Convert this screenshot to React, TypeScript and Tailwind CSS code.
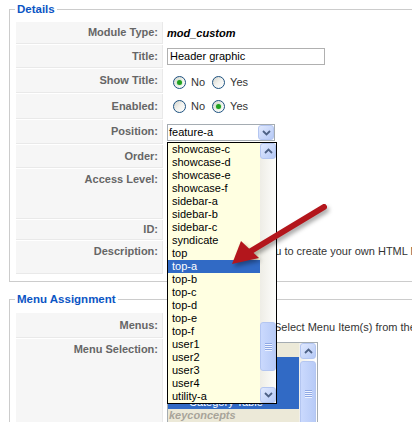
import React from "react";

const positions = [
  "showcase-c",
  "showcase-d",
  "showcase-e",
  "showcase-f",
  "sidebar-a",
  "sidebar-b",
  "sidebar-c",
  "syndicate",
  "top",
  "top-a",
  "top-b",
  "top-c",
  "top-d",
  "top-e",
  "top-f",
  "user1",
  "user2",
  "user3",
  "user4",
  "utility-a",
];

// rows of the menu list that sit under the open dropdown
const menuItems = ["", "", "", "Category Table"];

function Radio({ checked }: { checked?: boolean }) {
  return (
    <span className="inline-flex h-[13px] w-[13px] shrink-0 items-center justify-center rounded-full border border-[#1c5180] bg-linear-to-br from-[#d4d4cc] via-[#f2f2ee] to-white">
      {checked && <span className="h-[5px] w-[5px] rounded-full bg-[#21a121] shadow-[0_0_2px_#8fdc8f]" />}
    </span>
  );
}

function ScrollButton({ dir, size = "h-[16px] w-[16px]" }: { dir: "up" | "down"; size?: string }) {
  return (
    <div
      className={`flex shrink-0 items-center justify-center rounded-[3px] border border-[#b4c6f1] bg-linear-to-br from-[#e1e9fe] to-[#b5c9f6] ${size}`}
    >
      <svg width="9" height="6" viewBox="0 0 9 6">
        <path
          d={dir === "up" ? "M1 5 L4.5 1.5 L8 5" : "M1 1 L4.5 4.5 L8 1"}
          fill="none"
          stroke="#4d6185"
          strokeWidth="1.8"
        />
      </svg>
    </div>
  );
}

function ScrollThumb({ height }: { height: string }) {
  return (
    <div
      className={`flex w-[16px] shrink-0 flex-col items-center justify-center gap-px rounded-[3px] border border-[#b4c6f1] bg-linear-to-r from-[#cad9fd] to-[#b8cbf7] ${height}`}
    >
      {[0, 1, 2, 3].map((i) => (
        <div key={i} className="h-px w-[7px] bg-[#8fa8e4] shadow-[0_1px_0_#eef3ff]" />
      ))}
    </div>
  );
}

interface RowProps {
  height: string;
  label: string;
  alignTop?: boolean;
  valueClass?: string;
  children?: React.ReactNode;
}

function Row({ height, label, alignTop, valueClass, children }: RowProps) {
  return (
    <div className={`flex ${height}`}>
      <div
        className={`flex w-[147px] shrink-0 justify-end whitespace-nowrap border-r border-b border-[#e9e9e9] bg-[#f6f6f6] pr-[4px] text-[11px] leading-[13px] font-bold text-[#666666] ${
          alignTop ? "items-start pt-[4px]" : "items-center"
        }`}
      >
        {label}
      </div>
      <div
        className={`ml-px flex min-w-0 flex-1 pl-[3px] text-[11px] leading-[13px] text-[#333333] ${
          valueClass ?? "items-center"
        }`}
      >
        {children}
      </div>
    </div>
  );
}

export default function App() {
  return (
    <div className="relative h-[422px] w-[412px] overflow-hidden bg-white pt-[2px] font-['Liberation_Sans',Arial,sans-serif]">
      {/* Details */}
      <fieldset className="ml-[9px] w-[420px] border border-[#cccccc] px-[6px] pt-[6px] pb-[7px]">
        <legend className="-ml-[1px] px-[2px] text-[11.5px] leading-[14px] font-bold text-[#0b55c4]">Details</legend>
        <div className="flex flex-col gap-px">
          <Row height="h-[22px]" label="Module Type:">
            <span className="font-bold italic text-black">mod_custom</span>
          </Row>
          <Row height="h-[23px]" label="Title:">
            <div className="flex h-[17px] w-[158px] items-center border border-[#b0b0b0] bg-white pl-[2px] text-black">
              Header graphic
            </div>
          </Row>
          <Row height="h-[24px]" label="Show Title:" valueClass="items-center pt-[3px]">
            <span className="ml-[6px] flex">
              <Radio checked />
            </span>
            <span className="ml-[5px]">No</span>
            <span className="ml-[7px] flex">
              <Radio />
            </span>
            <span className="ml-[5px]">Yes</span>
          </Row>
          <Row height="h-[25px]" label="Enabled:">
            <span className="ml-[6px] flex">
              <Radio />
            </span>
            <span className="ml-[5px]">No</span>
            <span className="ml-[7px] flex">
              <Radio checked />
            </span>
            <span className="ml-[5px]">Yes</span>
          </Row>
          <Row height="h-[24px]" label="Position:" valueClass="items-start pt-[4px]">
            <div className="flex h-[17px] w-[108px] border border-[#a5acb2] bg-white">
              <span className="flex flex-1 items-center pl-[1px] text-black">feature-a</span>
              <ScrollButton dir="down" size="h-[15px] w-[16px]" />
            </div>
          </Row>
          <Row height="h-[23px]" label="Order:" />
          <Row height="h-[50px]" label="Access Level:" alignTop />
          <Row height="h-[20px]" label="ID:" />
          <Row height="h-[33px]" label="Description:" alignTop valueClass="items-start pt-[4px]">
            <span className="whitespace-nowrap">
              This Module allows you to create your own HTML Module using a WYSIWYG Editor.
            </span>
          </Row>
        </div>
      </fieldset>

      {/* Menu Assignment */}
      <fieldset className="mt-[10px] ml-[9px] w-[420px] border border-[#cccccc] px-[6px] pt-[7px] pb-[7px]">
        <legend className="-ml-[1px] px-[2px] text-[11.5px] leading-[14px] font-bold text-[#0b55c4]">
          Menu Assignment
        </legend>
        <div className="flex flex-col gap-px">
          <Row height="h-[25px]" label="Menus:" valueClass="items-center pt-[3px]">
            <div className="flex w-[107px] shrink-0 items-center gap-[30px] overflow-hidden pl-[4px]">
              <Radio checked />
              <Radio />
              <Radio />
            </div>
            <span className="whitespace-nowrap">Select Menu Item(s) from the List</span>
          </Row>
          <Row height="h-[110px]" label="Menu Selection:" alignTop valueClass="items-start pt-[3px]">
            <div className="flex h-[100px] w-[151px] shrink-0 border border-[#a5acb2] bg-[#ece9d8]">
              <div className="flex w-[131px] flex-col overflow-hidden text-[11px] leading-[13px]">
                <div className="h-[14px]" />
                {menuItems.map((item, i) => (
                  <div key={i} className="h-[13px] whitespace-nowrap bg-[#316ac5] pl-[21px] text-white">
                    {item}
                  </div>
                ))}
                <div className="h-[13px] pl-[1px] font-bold italic text-[#a8a49a]">keyconcepts</div>
              </div>
              <div className="flex w-[18px] flex-col items-center bg-linear-to-r from-[#f0efe9] to-white">
                <ScrollButton dir="up" />
                <div className="mt-[2px]">
                  <ScrollThumb height="h-[64px]" />
                </div>
              </div>
            </div>
          </Row>
        </div>
      </fieldset>

      {/* open position dropdown */}
      <div className="absolute top-[142px] left-[167px] flex h-[262px] w-[110px] border border-black bg-[#ffffe1]">
        <div className="flex w-[92px] flex-col text-[11px] leading-[13px] text-black">
          {positions.map((p) => (
            <div
              key={p}
              className={`h-[13px] whitespace-nowrap pl-[4px] ${p === "top-a" ? "bg-[#316ac5] text-white" : ""}`}
            >
              {p}
            </div>
          ))}
        </div>
        <div className="flex w-[16px] flex-col bg-linear-to-r from-[#eeede6] to-[#fdfdfb]">
          <ScrollButton dir="up" />
          <div className="flex-1" />
          <ScrollThumb height="h-[49px]" />
          <div className="h-[16px]" />
          <ScrollButton dir="down" />
        </div>
      </div>

      {/* callout arrow */}
      <svg
        className="pointer-events-none absolute top-0 left-0 drop-shadow-[2px_3px_2px_rgba(0,0,0,0.35)]"
        width="412"
        height="422"
        viewBox="0 0 412 422"
      >
        <line x1="324" y1="207" x2="246" y2="254" stroke="#b3161c" strokeWidth="6" strokeLinecap="round" />
        <polygon points="232,264 241,241 259,258" fill="#b3161c" />
      </svg>
    </div>
  );
}
